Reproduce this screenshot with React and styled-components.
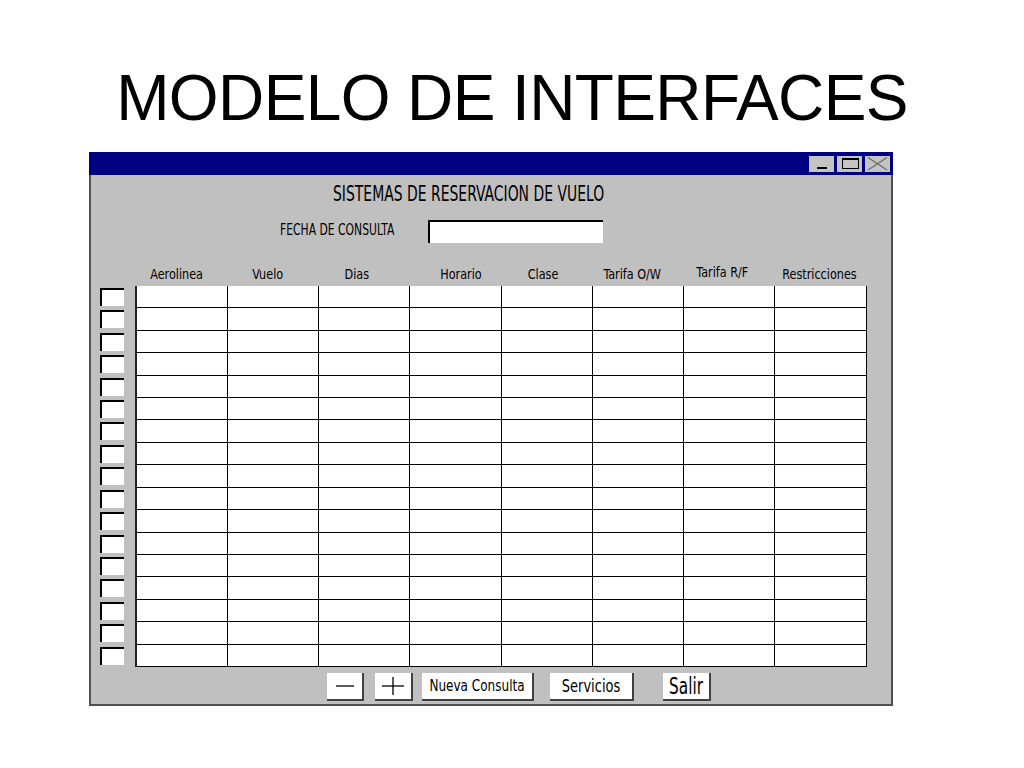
import React from "react";
import styled, { createGlobalStyle } from "styled-components";

const narrow = `"DejaVu Sans Condensed", "Liberation Sans Narrow", "Arial Narrow", sans-serif`;

const GlobalStyle = createGlobalStyle`
  html, body { margin: 0; padding: 0; background: #fff; }
  body { font-family: "Liberation Sans", Arial, sans-serif; }
  * { box-sizing: border-box; }
`;

const Page = styled.div`
  width: 1024px;
  height: 768px;
  padding-top: 58px;
`;

const Title = styled.h1`
  margin: 0;
  font: normal 64px/80px "Liberation Sans", Arial, sans-serif;
  letter-spacing: -0.6px;
  text-align: center;
  color: #000;
`;

const Window = styled.div`
  margin: 14px 0 0 89px;
  width: 804px;
  border: 2px solid #505050;
  border-top: none;
  background: #c0c0c0;
`;

const TitleBar = styled.div`
  height: 23px;
  margin: 0 -2px;
  background: #000080;
  display: flex;
  justify-content: flex-end;
  align-items: flex-start;
  gap: 3px;
  padding: 4px 3px 0 0;
`;

const CaptionButton = styled.div`
  width: 25px;
  height: 16px;
  background: #c4c4c4;
  display: flex;
  svg { display: block; }
`;

const HeadingRow = styled.div`
  height: 38px;
  display: flex;
  align-items: center;
  padding: 4px 0 0 242px;
`;

const Heading = styled.span`
  display: inline-block;
  font: normal 15.5px/1 ${narrow};
  white-space: nowrap;
  transform: scaleY(1.33);
  color: #000;
`;

const DateRow = styled.div`
  height: 36px;
  display: flex;
  align-items: center;
  padding-left: 189px;
`;

const DateLabel = styled.span`
  display: inline-block;
  width: 148px;
  padding-bottom: 3px;
  font: normal 12px/1 ${narrow};
  white-space: nowrap;
  transform: scaleY(1.37);
  transform-origin: left center;
`;

const DateInput = styled.div`
  width: 175px;
  height: 23px;
  background: #fff;
  border-top: 2px solid #000;
  border-left: 2px solid #000;
`;

const HeaderRow = styled.div`
  height: 37px;
  margin-left: 44px;
  width: 732px;
  display: grid;
  grid-template-columns: repeat(8, 1fr);
  align-items: end;
  padding: 0 1px 5px 2px;
`;

const HeaderCell = styled.span`
  font: normal 12.5px/1 ${narrow};
  text-align: center;
  white-space: nowrap;
  transform: translate(${(p) => p.$dx || 0}px, ${(p) => -(p.$up || 0)}px) scaleY(1.08);
`;

const GridArea = styled.div`
  height: 381px;
  display: flex;
  gap: 11px;
  padding-left: 9px;
`;

const Checks = styled.div`
  width: 24px;
  display: grid;
  grid-template-rows: repeat(17, 1fr);
`;

const Check = styled.div`
  height: 18px;
  margin-top: 2px;
  background: #fff;
  border-top: 2px solid #000;
  border-left: 2px solid #000;
`;

const Table = styled.div`
  width: 732px;
  display: grid;
  grid-template-columns: repeat(8, 1fr);
  grid-template-rows: repeat(17, 1fr);
  background: #fff;
  border-left: 2px solid #222;
  border-right: 1px solid #000;
`;

const Cell = styled.div`
  border-bottom: 1px solid #000;
  border-right: ${(p) => (p.$last ? "none" : "1px solid #000")};
`;

const ButtonRow = styled.div`
  height: 37px;
  display: flex;
  align-items: flex-start;
  padding: 6px 0 0 236px;
`;

const Button = styled.div`
  width: ${(p) => p.$w}px;
  height: 28px;
  margin-left: ${(p) => p.$ml || 0}px;
  background: #fff;
  border-right: 2px solid #404040;
  border-bottom: 2px solid #404040;
  display: flex;
  align-items: center;
  justify-content: center;
  font: normal ${(p) => p.$size || 15}px/1 ${narrow};
  white-space: nowrap;
  color: #000;
  span {
    display: inline-block;
    transform: scaleY(${(p) => p.$sy || 1});
  }
  svg { display: block; }
`;

const headers = [
  { label: "Aerolinea", dx: -6 },
  { label: "Vuelo", dx: -6 },
  { label: "Dias", dx: -8 },
  { label: "Horario", dx: 5 },
  { label: "Clase", dx: -4 },
  { label: "Tarifa O/W", dx: -6 },
  { label: "Tarifa R/F", dx: -7, up: 2 },
  { label: "Restricciones", dx: -1 },
];

const rows = Array.from({ length: 17 }, (_, i) => i);
const cols = Array.from({ length: 8 }, (_, i) => i);

export default function App() {
  return (
    <Page>
      <GlobalStyle />
      <Title>MODELO DE INTERFACES</Title>
      <Window>
        <TitleBar>
          <CaptionButton>
            <svg width="25" height="16" viewBox="0 0 25 16">
              <rect x="8" y="11" width="10" height="2" fill="#000" />
            </svg>
          </CaptionButton>
          <CaptionButton>
            <svg width="25" height="16" viewBox="0 0 25 16">
              <rect x="5.5" y="2.5" width="16" height="10" fill="none" stroke="#000" strokeWidth="1" />
              <rect x="5" y="2" width="17" height="2" fill="#000" />
            </svg>
          </CaptionButton>
          <CaptionButton>
            <svg width="25" height="16" viewBox="0 0 25 16">
              <path d="M3 1.5 L22 14 M22 1.5 L3 14" stroke="#666" strokeWidth="1.1" fill="none" />
            </svg>
          </CaptionButton>
        </TitleBar>

        <HeadingRow>
          <Heading>SISTEMAS DE RESERVACION DE VUELO</Heading>
        </HeadingRow>

        <DateRow>
          <DateLabel>FECHA DE CONSULTA</DateLabel>
          <DateInput />
        </DateRow>

        <HeaderRow>
          {headers.map((h) => (
            <HeaderCell key={h.label} $dx={h.dx} $up={h.up}>
              {h.label}
            </HeaderCell>
          ))}
        </HeaderRow>

        <GridArea>
          <Checks>
            {rows.map((r) => (
              <Check key={r} />
            ))}
          </Checks>
          <Table>
            {rows.map((r) =>
              cols.map((c) => <Cell key={`${r}-${c}`} $last={c === 7} />)
            )}
          </Table>
        </GridArea>

        <ButtonRow>
          <Button $w={37}>
            <svg width="18" height="4" viewBox="0 0 18 4">
              <line x1="0" y1="2" x2="18" y2="2" stroke="#000" strokeWidth="1.3" />
            </svg>
          </Button>
          <Button $w={38} $ml={11}>
            <svg width="22" height="18" viewBox="0 0 22 18">
              <line x1="0" y1="9" x2="22" y2="9" stroke="#000" strokeWidth="1.3" />
              <line x1="11" y1="0" x2="11" y2="18" stroke="#000" strokeWidth="1.3" />
            </svg>
          </Button>
          <Button $w={112} $ml={9} $size={13.4} $sy={1.22}>
            <span>Nueva Consulta</span>
          </Button>
          <Button $w={84} $ml={16} $size={14.5} $sy={1.2}>
            <span>Servicios</span>
          </Button>
          <Button $w={48} $ml={29} $size={17} $sy={1.35}>
            <span>Salir</span>
          </Button>
        </ButtonRow>
      </Window>
    </Page>
  );
}
